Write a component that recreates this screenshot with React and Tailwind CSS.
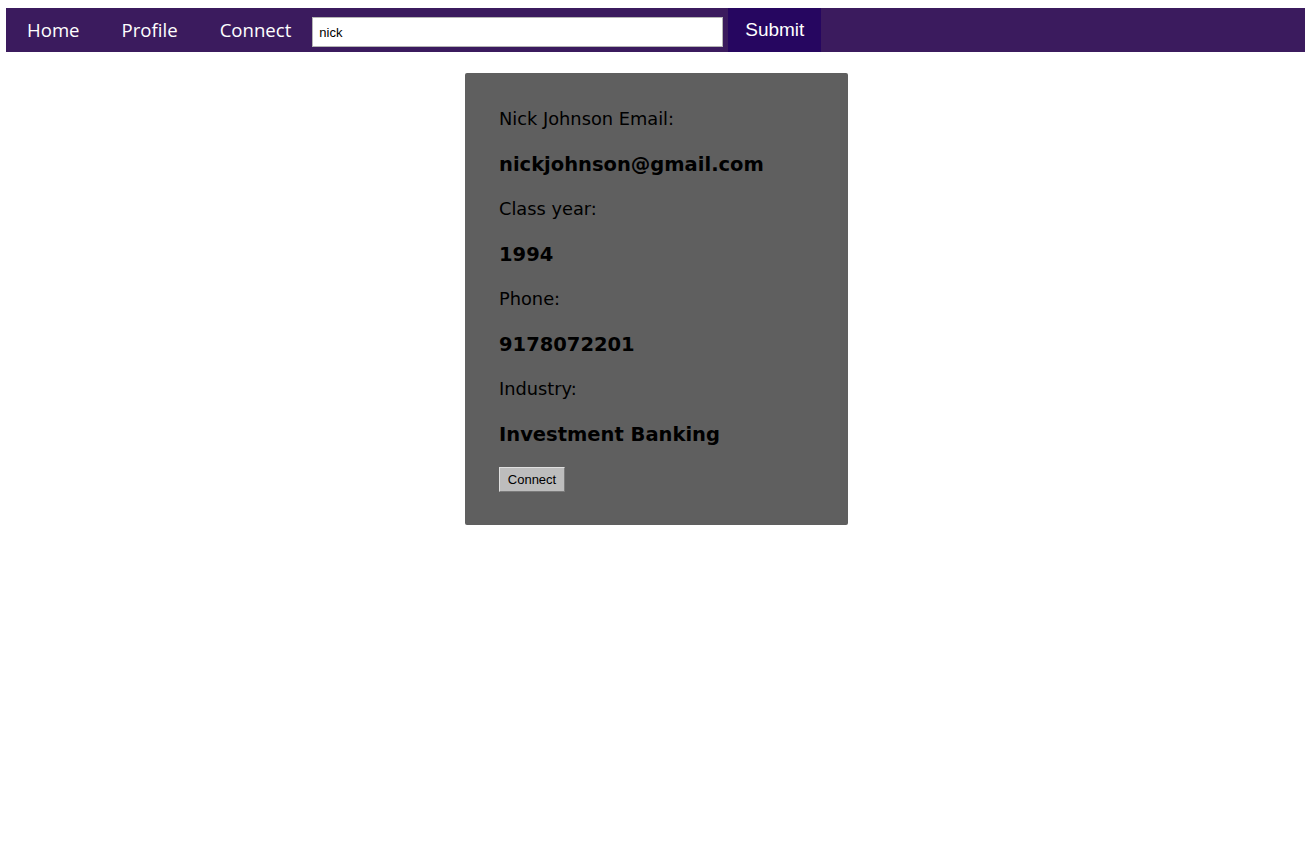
import React, { useState } from 'react';

const NavLink = ({ children }) => (
  <a href="#" className="px-[21px] text-[18.6px] text-white leading-[44px]" style={{ fontFamily: '"Open Sans", sans-serif' }}>
    {children}
  </a>
);

const Field = ({ label, value }) => (
  <>
    <div className="h-[45px] flex items-center text-[17.8px] text-black">{label}</div>
    <div className="h-[45px] flex items-center text-[19.5px] font-bold text-black">{value}</div>
  </>
);

const App = () => {
  const [query, setQuery] = useState('nick');

  return (
    <div className="min-h-screen bg-white pt-2 px-[6px]">
      <nav className="flex items-center h-[44px] bg-[#3b1b5e]">
        <NavLink>Home</NavLink>
        <NavLink>Profile</NavLink>
        <NavLink>Connect</NavLink>
        <input
          value={query}
          onChange={(e) => setQuery(e.target.value)}
          className="mt-[4px] w-[411px] h-[30px] bg-white border border-[#b5b5b5] px-[6px] text-[13px] text-black outline-none"
          style={{ fontFamily: '"Liberation Sans", Arial, sans-serif' }}
        />
        <button
          className="ml-[5px] h-[44px] w-[93px] pt-[1px] bg-[#260660] text-white text-[19px]"
          style={{ fontFamily: '"Liberation Sans", Arial, sans-serif' }}
        >
          Submit
        </button>
      </nav>

      <div className="flex justify-center mt-[21px] pl-[2px]">
        <div
          className="w-[383px] bg-[#5f5f5f] rounded-[2px] pl-[34px] pt-[24px] pb-[33px]"
          style={{ fontFamily: '"DejaVu Sans", sans-serif' }}
        >
          <Field label="Nick Johnson Email:" value="nickjohnson@gmail.com" />
          <Field label="Class year:" value="1994" />
          <Field label="Phone:" value="9178072201" />
          <Field label="Industry:" value="Investment Banking" />
          <button
            className="mt-[10px] w-[66px] h-[25px] bg-[#bdbdbd] border border-t-[#e0e0e0] border-l-[#e0e0e0] border-r-[#7a7a7a] border-b-[#7a7a7a] text-[13px] text-black"
            style={{ fontFamily: '"Liberation Sans", Arial, sans-serif' }}
          >
            Connect
          </button>
        </div>
      </div>
    </div>
  );
};

export default App;
